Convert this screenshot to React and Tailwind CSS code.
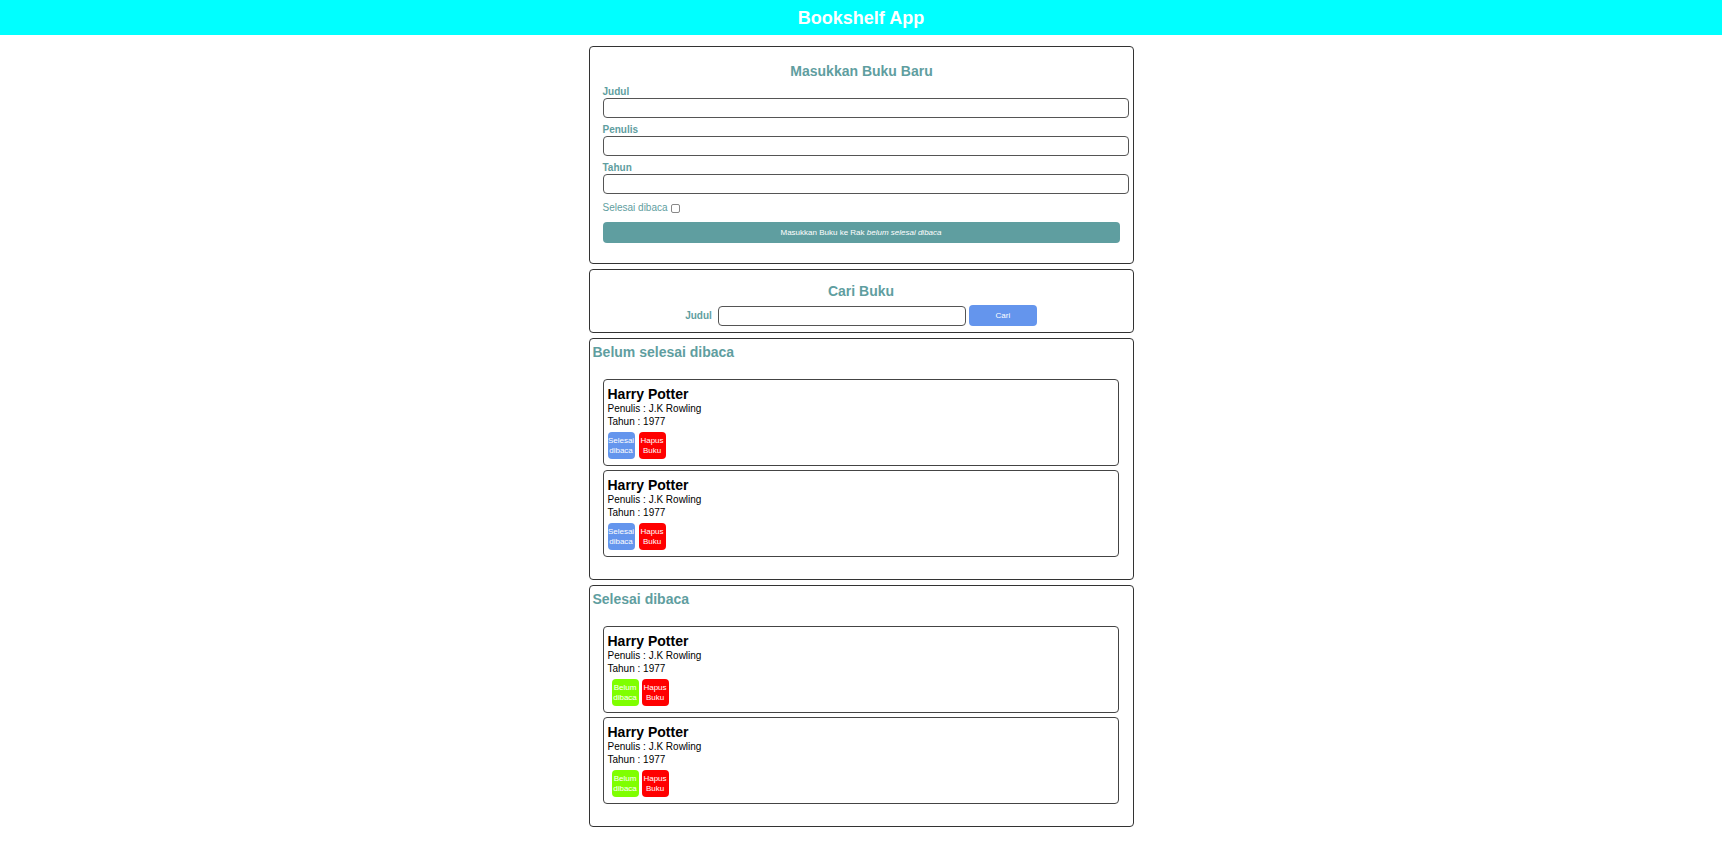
const panel = "rounded border border-[#333] bg-white";
const field = "h-5 rounded border border-[#555] bg-white px-1 text-[10px] outline-none";

function Field({ id, label, type = "text" }) {
  return (
    <div className="flex flex-col">
      <label htmlFor={id} className="text-[10px] leading-3 font-bold">
        {label}
      </label>
      <input id={id} type={type} className={`${field} w-full`} />
    </div>
  );
}

function AddBook() {
  return (
    <section className={`${panel} pt-4 pr-1 pb-5 pl-[13px]`}>
      <h2 className="pr-2 text-center text-sm leading-4 font-bold">Masukkan Buku Baru</h2>
      <form className="mt-[7px]" onSubmit={(e) => e.preventDefault()}>
        <div className="flex flex-col gap-[6px]">
          <Field id="title" label="Judul" />
          <Field id="author" label="Penulis" />
          <Field id="year" label="Tahun" />
        </div>
        <div className="mt-[6px] flex items-center gap-[3px]">
          <label htmlFor="done" className="text-[10px] leading-4">
            Selesai dibaca
          </label>
          <input
            id="done"
            type="checkbox"
            className="size-[9px] appearance-none rounded-xs border border-[#888] checked:bg-[#5f9ea0]"
          />
        </div>
        <div className="mt-[6px] pr-[9px]">
          <button type="submit" className="block h-[21px] w-full rounded bg-[#5f9ea0] text-[8px] text-white">
            Masukkan Buku ke Rak <em>belum selesai dibaca</em>
          </button>
        </div>
      </form>
    </section>
  );
}

function SearchBook() {
  return (
    <section className={`${panel} pt-[13px] pb-[6px]`}>
      <h2 className="text-center text-sm leading-4 font-bold">Cari Buku</h2>
      <form className="mt-[6px] flex items-center justify-center" onSubmit={(e) => e.preventDefault()}>
        <label htmlFor="search" className="mr-[6px] text-[10px] leading-4 font-bold">
          Judul
        </label>
        <input id="search" type="text" className={`${field} mr-[3px] w-[248px]`} />
        <button type="submit" className="h-[21px] w-[68px] rounded bg-[#6495ed] text-[8px] text-white">
          Cari
        </button>
      </form>
    </section>
  );
}

const action = "size-[27px] rounded text-center text-[8px] leading-[10px] text-white";

function Book({ done }) {
  return (
    <article className="rounded border border-[#444] px-1 pt-[6px] pb-[6px] text-black">
      <h3 className="text-sm leading-4 font-bold">Harry Potter</h3>
      <p className="text-[10px] leading-[13px]">Penulis : J.K Rowling</p>
      <p className="text-[10px] leading-[13px]">Tahun : 1977</p>
      <div className={`mt-1 flex ${done ? "gap-[3px] pl-1" : "gap-1"}`}>
        <button type="button" className={`${action} ${done ? "bg-[#7fff00]" : "bg-[#6495ed]"}`}>
          {done ? "Belum" : "Selesai"}
          <br />
          dibaca
        </button>
        <button type="button" className={`${action} bg-[#ff0000]`}>
          Hapus
          <br />
          Buku
        </button>
      </div>
    </article>
  );
}

function Shelf({ title, done }) {
  return (
    <section className={`${panel} pt-[5px] pb-[22px]`}>
      <h2 className="pl-[3px] text-sm leading-4 font-bold">{title}</h2>
      <div className="mt-[19px] flex flex-col gap-1 pr-[14px] pl-[13px]">
        <Book done={done} />
        <Book done={done} />
      </div>
    </section>
  );
}

export default function App() {
  return (
    <div className="min-h-screen bg-white font-['Liberation_Sans',Arial,sans-serif] text-[#5f9ea0]">
      <header className="bg-[#00ffff] pt-[6px] pb-[5px] text-center">
        <h1 className="text-lg leading-6 font-bold text-white">Bookshelf App</h1>
      </header>
      <main className="mx-auto mt-[11px] flex max-w-[545px] flex-col gap-[5px]">
        <AddBook />
        <SearchBook />
        <Shelf title="Belum selesai dibaca" done={false} />
        <Shelf title="Selesai dibaca" done />
      </main>
    </div>
  );
}
